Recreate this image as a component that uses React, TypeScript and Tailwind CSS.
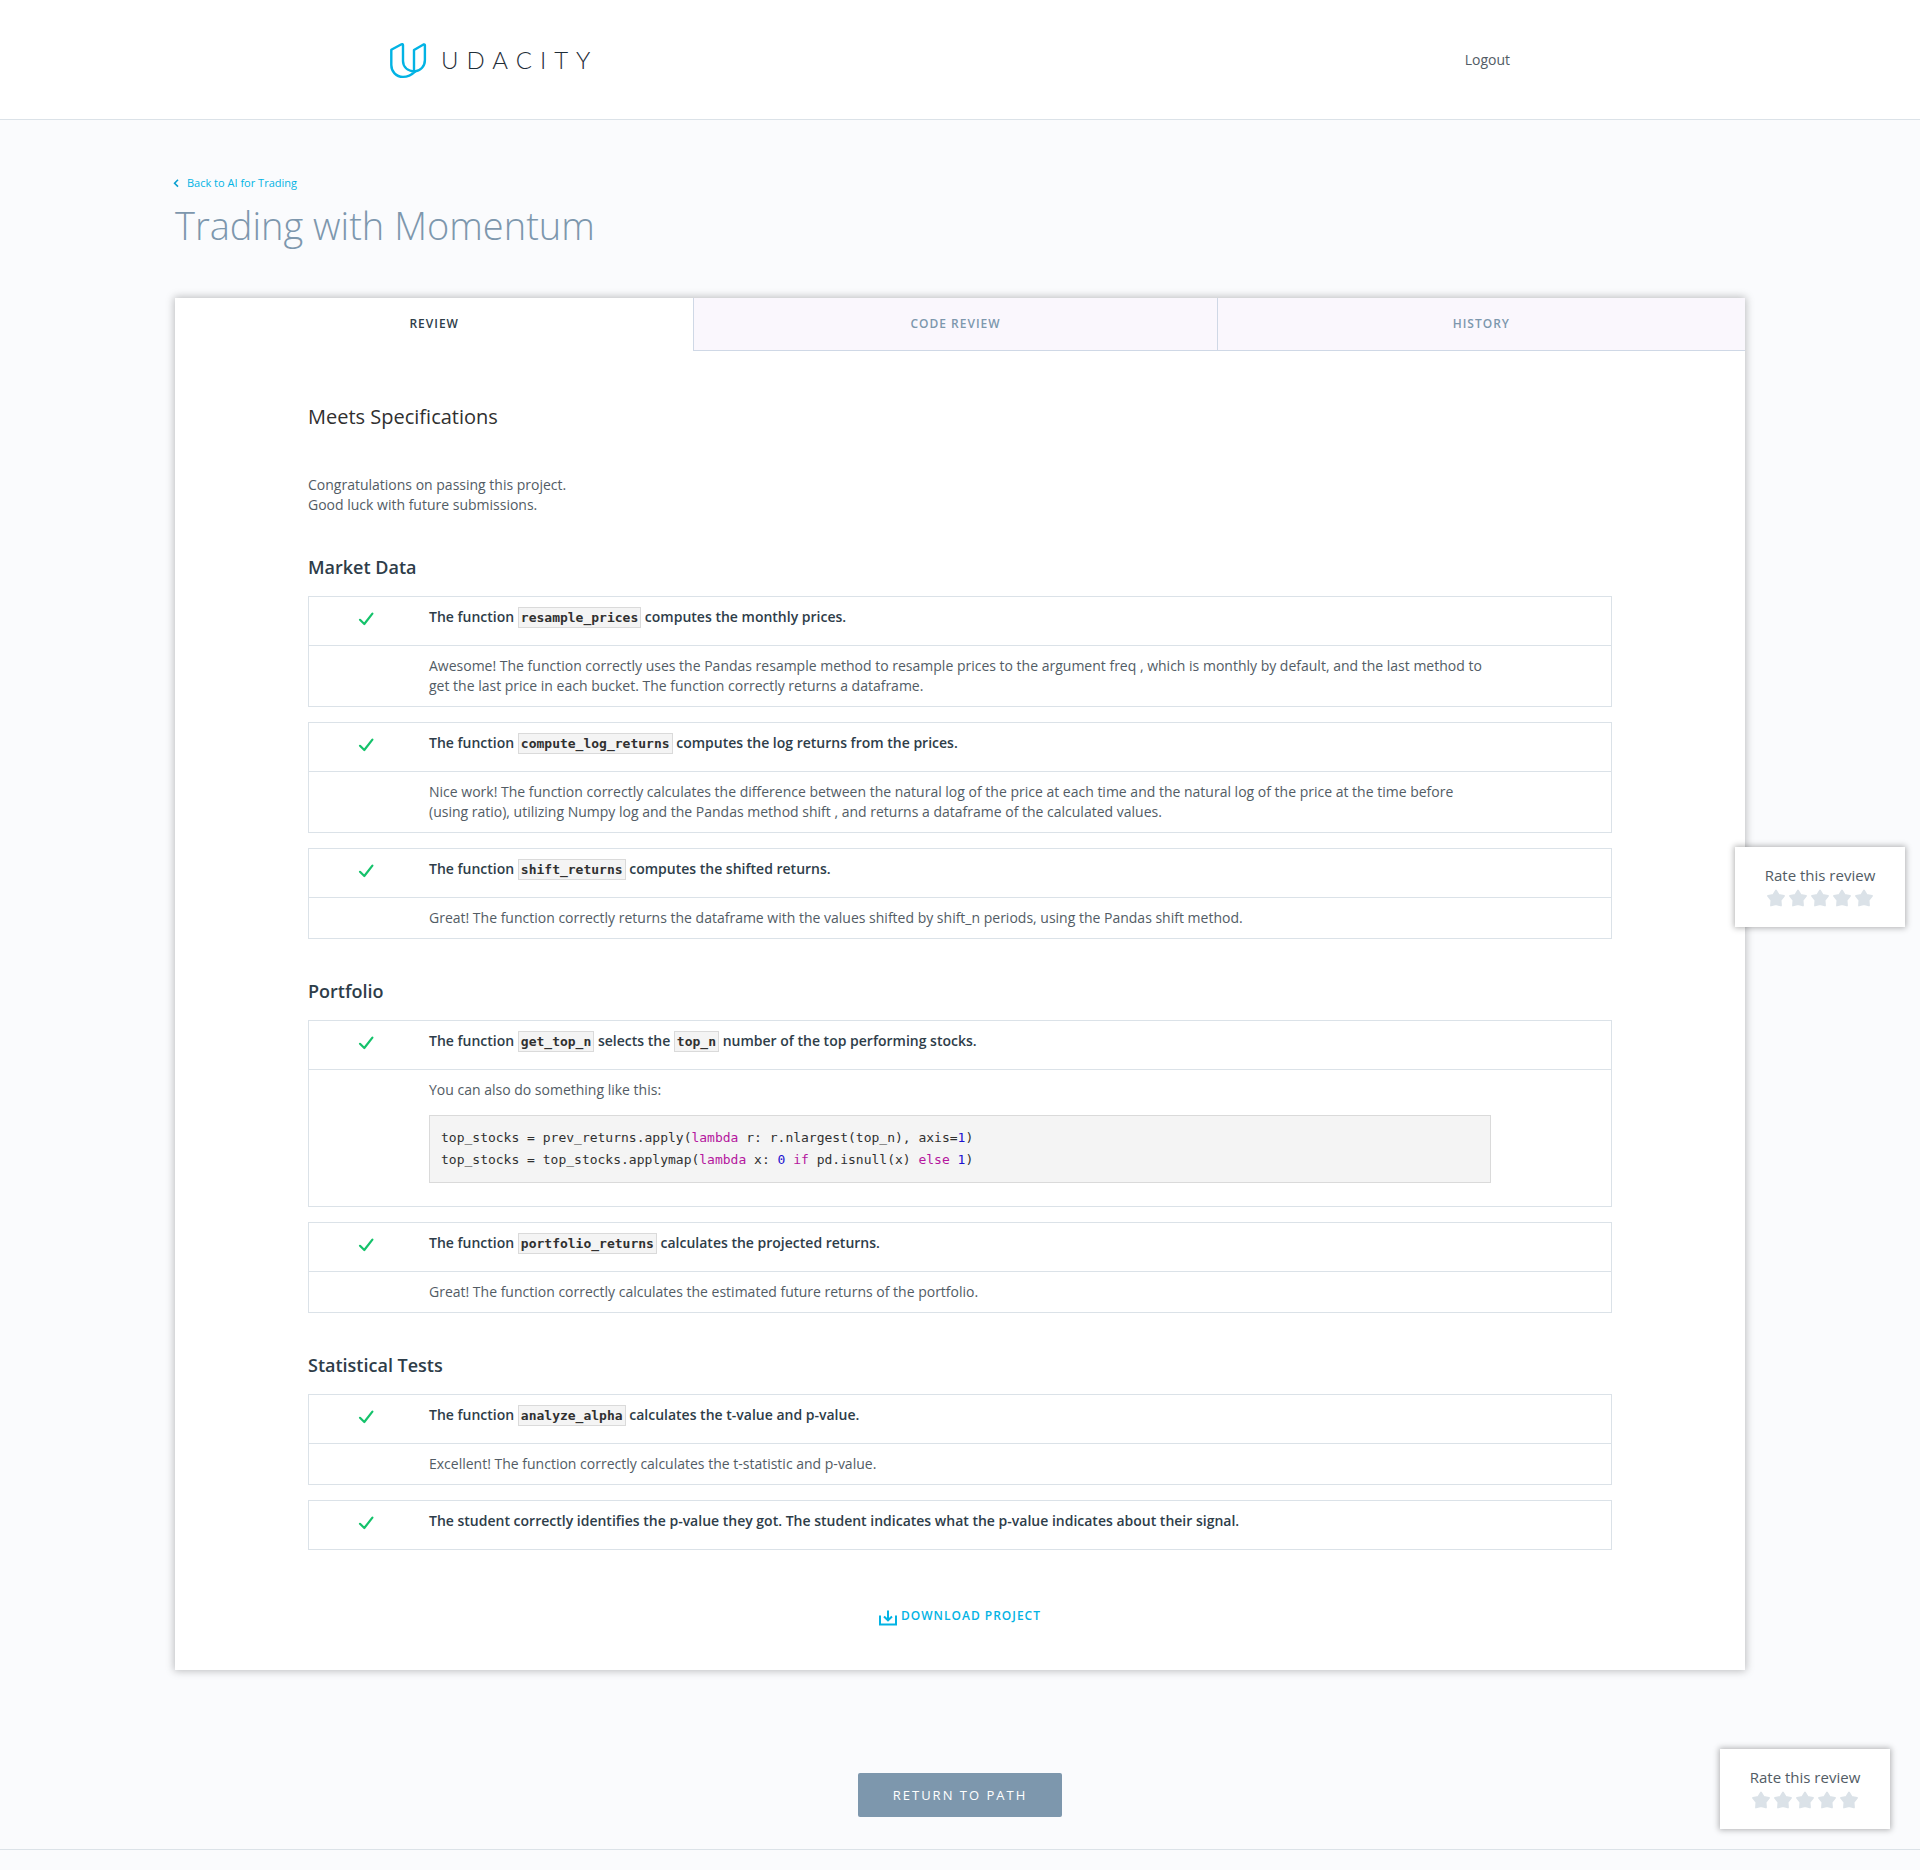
import React from "react";

type Criterion = { title: React.ReactNode; feedback?: React.ReactNode };
type Section = { heading: string; criteria: Criterion[] };

const MONO = "font-['DejaVu_Sans_Mono',monospace]";

function Code({ children }: { children: React.ReactNode }) {
  return (
    <code className={`${MONO} border border-[#dadada] bg-[#f4f4f4] px-0.5 py-0.5 text-[13px] leading-none font-bold text-[#303030]`}>
      {children}
    </code>
  );
}

function Keyword({ children }: { children: React.ReactNode }) {
  return <span className="text-[#b5179e]">{children}</span>;
}

function Num({ children }: { children: React.ReactNode }) {
  return <span className="text-[#1c10d0]">{children}</span>;
}

const sections: Section[] = [
  {
    heading: "Market Data",
    criteria: [
      {
        title: <>The function <Code>resample_prices</Code> computes the monthly prices.</>,
        feedback:
          "Awesome! The function correctly uses the Pandas resample method to resample prices to the argument freq , which is monthly by default, and the last method to get the last price in each bucket. The function correctly returns a dataframe.",
      },
      {
        title: <>The function <Code>compute_log_returns</Code> computes the log returns from the prices.</>,
        feedback:
          "Nice work! The function correctly calculates the difference between the natural log of the price at each time and the natural log of the price at the time before (using ratio), utilizing Numpy log and the Pandas method shift , and returns a dataframe of the calculated values.",
      },
      {
        title: <>The function <Code>shift_returns</Code> computes the shifted returns.</>,
        feedback:
          "Great! The function correctly returns the dataframe with the values shifted by shift_n periods, using the Pandas shift method.",
      },
    ],
  },
  {
    heading: "Portfolio",
    criteria: [
      {
        title: <>The function <Code>get_top_n</Code> selects the <Code>top_n</Code> number of the top performing stocks.</>,
        feedback: (
          <>
            <p>You can also do something like this:</p>
            <pre className={`${MONO} mt-[15px] mb-[13px] border border-[#dadada] bg-[#f4f4f4] px-[11px] py-[11px] text-[13px] leading-[22px] text-[#303030]`}>
              top_stocks = prev_returns.apply(<Keyword>lambda</Keyword> r: r.nlargest(top_n), axis=<Num>1</Num>){"\n"}
              top_stocks = top_stocks.applymap(<Keyword>lambda</Keyword> x: <Num>0</Num> <Keyword>if</Keyword> pd.isnull(x) <Keyword>else</Keyword> <Num>1</Num>)
            </pre>
          </>
        ),
      },
      {
        title: <>The function <Code>portfolio_returns</Code> calculates the projected returns.</>,
        feedback: "Great! The function correctly calculates the estimated future returns of the portfolio.",
      },
    ],
  },
  {
    heading: "Statistical Tests",
    criteria: [
      {
        title: <>The function <Code>analyze_alpha</Code> calculates the t-value and p-value.</>,
        feedback: "Excellent! The function correctly calculates the t-statistic and p-value.",
      },
      {
        title:
          "The student correctly identifies the p-value they got. The student indicates what the p-value indicates about their signal.",
      },
    ],
  },
];

function CriterionBox({ title, feedback }: Criterion) {
  return (
    <article className="border border-[#dbe2e8] text-sm leading-5">
      <div className="flex pt-2.5 pb-[18px]">
        <div className="flex w-[120px] shrink-0 justify-center pt-[5px] pr-1.5">
          <svg width="16" height="14" viewBox="0 0 16 14" fill="none" aria-label="Meets specification">
            <path d="M2 7.8 6.3 12 14.4 1.6" stroke="#15c26b" strokeWidth="2.2" strokeLinecap="round" strokeLinejoin="round" />
          </svg>
        </div>
        <h4 className="font-semibold text-[#2e3d49]">{title}</h4>
      </div>
      {feedback && (
        <div className="border-t border-[#dbe2e8] py-2.5 pr-[120px] pl-[120px] text-[#525c65]">{feedback}</div>
      )}
    </article>
  );
}

function RateCard({ className }: { className: string }) {
  return (
    <aside className={`${className} w-[170px] bg-white pt-4 pb-5 text-center shadow-[0_0_6px_1px_rgba(0,0,0,0.3)]`}>
      <p className="mb-0.5 text-[15px] leading-6 text-[#525c65]">Rate this review</p>
      <div className="flex justify-center gap-1">
        {[1, 2, 3, 4, 5].map((n) => (
          <button key={n} type="button" aria-label={`Rate ${n} of 5`} className="block">
            <svg width="18" height="18" viewBox="0 0 18 18">
              <path
                d="M9 1.4 11.6 5.8 17 6.9 13.6 11.2 14 16.5 9 15.2 4 16.5 4.4 11.2 1 6.9 6.4 5.8Z"
                fill="#dbe2e8"
                stroke="#dbe2e8"
                strokeWidth="1.8"
                strokeLinejoin="round"
              />
            </svg>
          </button>
        ))}
      </div>
    </aside>
  );
}

export default function App() {
  return (
    <div className="relative min-h-screen bg-[#fafbfd] font-['Open_Sans',sans-serif]">
      <header className="border-b border-[#dbe2e8] bg-white">
        <div className="mx-auto flex h-[119px] max-w-[1140px] items-center justify-between pr-5">
          <a href="#home" className="flex items-center gap-[14px]">
            <svg width="37" height="36" viewBox="0 0 37 36" fill="none" stroke="#02b3e4" strokeWidth="2.4" strokeLinejoin="round" className="mt-[3px]" aria-hidden="true">
              <path d="M1.3 6.8 11.5 1.3Q13 .8 13 2.3V18C13 23.5 17 27.8 25 28.6 21.5 32 17.5 33.9 13 33.9 6 33.9 1.3 28.5 1.3 22Z" />
              <path d="M24 28.6V7L33.5 1.5Q34.9 1 34.9 2.3V17C34.9 23.5 30.5 28 24 28.6Z" />
            </svg>
            <span className="font-['Lato',sans-serif] text-2xl leading-9 font-light tracking-[8px] text-[#1f2d38]">UDACITY</span>
          </a>
          <a href="#logout" className="text-sm leading-5 text-[#525c65]">Logout</a>
        </div>
      </header>

      <main className="px-[175px] pt-[55px]">
        <a href="#path" className="flex items-center gap-[7px] text-[11px] leading-4 text-[#02b3e4]">
          <svg width="5" height="8" viewBox="0 0 5 8" fill="none" stroke="#0a9fd0" strokeWidth="1.6" className="overflow-visible" aria-hidden="true">
            <path d="M3 .8-.4 4.2 3 7.6" />
          </svg>
          Back to AI for Trading
        </a>
        <h1 className="mt-2.5 text-[38px] leading-[48px] font-light text-[#7d97ad]">Trading with Momentum</h1>

        <section className="mt-[49px] bg-white shadow-[0_0_8px_1px_rgba(0,0,0,0.25)]">
          <div role="tablist" className="flex text-xs leading-5 font-semibold tracking-[1px]">
            <button type="button" role="tab" aria-selected="true" className="grow-[519] basis-0 pt-4 pb-[17px] text-[#2e3d49]">REVIEW</button>
            <button type="button" role="tab" aria-selected="false" className="grow-[523] basis-0 border-b border-l border-[#cfd8e6] bg-[#faf7fd] pt-4 pb-4 text-[#7d97ad]">CODE REVIEW</button>
            <button type="button" role="tab" aria-selected="false" className="grow-[528] basis-0 border-b border-l border-[#cfd8e6] bg-[#faf7fd] pt-4 pb-4 text-[#7d97ad]">HISTORY</button>
          </div>

          <div className="px-[133px] pt-[52px] pb-11">
            <h2 className="text-xl leading-7 text-[#303030]">Meets Specifications</h2>
            <p className="mt-11 text-sm leading-5 text-[#525c65]">
              Congratulations on passing this project.
              <br />
              Good luck with future submissions.
            </p>

            {sections.map((s) => (
              <section key={s.heading} className="mt-[39px]">
                <h3 className="text-lg leading-[27px] font-semibold text-[#2e3d49]">{s.heading}</h3>
                <div className="mt-[15px] flex flex-col gap-[15px]">
                  {s.criteria.map((c, i) => (
                    <CriterionBox key={i} {...c} />
                  ))}
                </div>
              </section>
            ))}

            <div className="mt-14 flex justify-center">
              <a href="#download" className="flex items-center gap-1 text-xs leading-5 font-semibold tracking-[1px] text-[#02b3e4]">
                <svg width="18" height="16" viewBox="0 0 18 16" fill="none" stroke="#02b3e4" strokeWidth="2" className="mt-[3px]" aria-hidden="true">
                  <path d="M1 5.5V14.5H17V5.5M9 .5V10M5 6.5 9 10.3 13 6.5" />
                </svg>
                DOWNLOAD PROJECT
              </a>
            </div>
          </div>
        </section>

        <div className="mt-[103px] flex justify-center">
          <button type="button" className="rounded-[2px] bg-[#7d97ad] px-[35px] py-3 text-[13px] leading-5 tracking-[2px] text-white">RETURN TO PATH</button>
        </div>
      </main>

      <footer className="mt-8 h-[21px] border-t border-[#dbe2e8]" />

      <RateCard className="absolute top-[847px] right-[15px]" />
      <RateCard className="absolute right-[30px] bottom-[41px]" />
    </div>
  );
}
